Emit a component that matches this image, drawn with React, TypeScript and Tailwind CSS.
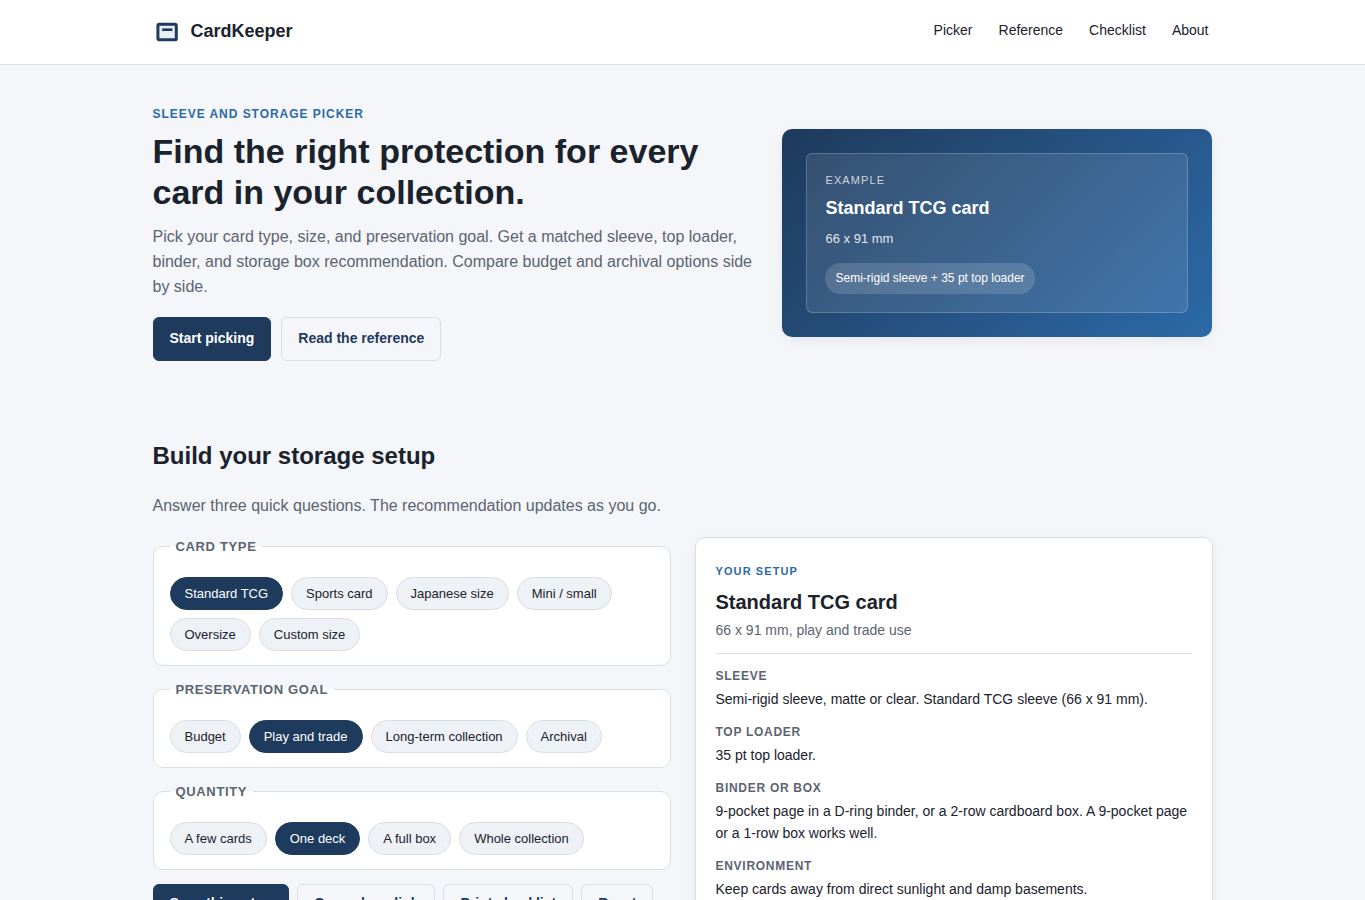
import { useState } from "react";

const navLinks = [
  { label: "Picker", href: "#picker" },
  { label: "Reference", href: "#reference" },
  { label: "Checklist", href: "#checklist" },
  { label: "About", href: "#about" },
];

const cardTypes = ["Standard TCG", "Sports card", "Japanese size", "Mini / small", "Oversize", "Custom size"];
const goals = ["Budget", "Play and trade", "Long-term collection", "Archival"];
const quantities = ["A few cards", "One deck", "A full box", "Whole collection"];

const setup = [
  { term: "Sleeve", detail: "Semi-rigid sleeve, matte or clear. Standard TCG sleeve (66 x 91 mm)." },
  { term: "Top loader", detail: "35 pt top loader." },
  {
    term: "Binder or box",
    detail: "9-pocket page in a D-ring binder, or a 2-row cardboard box. A 9-pocket page or a 1-row box works well.",
  },
  { term: "Environment", detail: "Keep cards away from direct sunlight and damp basements." },
];

const buttonBase = "rounded-md border px-4 py-2.5 text-sm font-bold";
const primaryButton = `${buttonBase} border-[#1e3a5c] bg-[#1e3a5c] text-white`;
const ghostButton = `${buttonBase} border-[#d9dee4] text-[#1e3a5c]`;

function Logo() {
  return (
    <svg width="28" height="28" viewBox="0 0 28 28" fill="none" aria-hidden="true">
      <rect x="4.9" y="6.2" width="18.4" height="15.6" rx="1.4" fill="#e6eff7" stroke="#1e3a5c" strokeWidth="3" />
      <path d="M9.2 11.7h10.2" stroke="#1e3a5c" strokeWidth="2.6" />
    </svg>
  );
}

function ChipGroup({ legend, options, initial }: { legend: string; options: string[]; initial: string }) {
  const [selected, setSelected] = useState(initial);
  return (
    <fieldset className="min-w-0 rounded-[10px] border border-[#d9dee4] bg-white px-4 pt-[21px] pb-3.5">
      <legend className="px-1.5 text-[13px] leading-[19px] font-bold tracking-[0.05em] text-[#5b6470] uppercase">
        {legend}
      </legend>
      <div className="flex flex-wrap gap-2">
        {options.map((option) => (
          <button
            key={option}
            type="button"
            aria-pressed={option === selected}
            onClick={() => setSelected(option)}
            className={`rounded-full border px-3.5 py-2 text-[13px] leading-[15px] ${
              option === selected
                ? "border-[#1e3a5c] bg-[#1e3a5c] text-white"
                : "border-[#d9dee4] bg-[#eef1f6] text-[#1a222c]"
            }`}
          >
            {option}
          </button>
        ))}
      </div>
    </fieldset>
  );
}

export default function App() {
  return (
    <div className="min-h-screen bg-[#f4f6fa] font-['Liberation_Sans',Arial,sans-serif] text-base text-[#1a222c]">
      <header className="border-b border-[#d9dee4] bg-white">
        <div className="mx-auto flex h-16 max-w-[1100px] items-center justify-between px-5">
          <a href="#home" className="flex items-center gap-2.5 text-lg leading-7 font-bold">
            <Logo />
            <span className="pb-0.5">CardKeeper</span>
          </a>
          <nav className="flex gap-[18px] pb-1 text-sm leading-[22px]" aria-label="Main">
            {navLinks.map((link) => (
              <a key={link.label} href={link.href} className="px-1">
                {link.label}
              </a>
            ))}
          </nav>
        </div>
      </header>

      <main className="mx-auto max-w-[1100px] px-5">
        <section className="grid grid-cols-[1.4fr_1fr] items-center gap-7 py-10">
          <div>
            <p className="mb-[7px] text-xs leading-[19px] font-bold tracking-[0.08em] text-[#2c6aa6] uppercase">
              Sleeve and storage picker
            </p>
            <h1 className="mb-[11px] text-[34px] leading-[41px] font-bold">
              Find the right protection for every card in your collection.
            </h1>
            <p className="mb-[18px] leading-[25px] text-[#5b6470]">
              Pick your card type, size, and preservation goal. Get a matched sleeve, top loader, binder, and storage
              box recommendation. Compare budget and archival options side by side.
            </p>
            <div className="flex flex-wrap gap-2.5 leading-[21px]">
              <a href="#picker" className={`${primaryButton} min-h-11 leading-5`}>
                Start picking
              </a>
              <a href="#reference" className={`${ghostButton} min-h-11 leading-5`}>
                Read the reference
              </a>
            </div>
          </div>

          <div className="rounded-[10px] bg-linear-135 from-[#1e3a5c] to-[#2c6aa8] p-6 text-white shadow-[0_4px_14px_rgba(15,23,42,0.06)]">
            <div className="rounded-md border border-white/20 bg-white/10 p-[18px]">
              <p className="mb-1.5 text-[11px] leading-[17px] tracking-[0.1em] text-white/75 uppercase">Example</p>
              <p className="mb-2 text-lg leading-[26px] font-bold">Standard TCG card</p>
              <p className="mb-3.5 text-[13px] leading-5 text-white/85">66 x 91 mm</p>
              <p className="w-fit rounded-full bg-white/15 px-2.5 py-1.5 text-xs leading-[19px]">
                Semi-rigid sleeve + 35 pt top loader
              </p>
            </div>
          </div>
        </section>

        <section id="picker" className="py-9">
          <h2 className="mb-[19px] text-2xl leading-[37px] font-bold">Build your storage setup</h2>
          <p className="mb-[19px] leading-[25px] text-[#5b6470]">
            Answer three quick questions. The recommendation updates as you go.
          </p>

          <div className="grid grid-cols-2 items-start gap-6">
            <form className="flex flex-col gap-3.5" onSubmit={(event) => event.preventDefault()}>
              <ChipGroup legend="Card type" options={cardTypes} initial="Standard TCG" />
              <ChipGroup legend="Preservation goal" options={goals} initial="Play and trade" />
              <ChipGroup legend="Quantity" options={quantities} initial="One deck" />
              <div className="flex flex-wrap gap-2">
                <button type="submit" className={`${primaryButton} leading-4`}>
                  Save this setup
                </button>
                <button type="button" className={`${ghostButton} leading-4`}>
                  Copy share link
                </button>
                <button type="button" className={`${ghostButton} leading-4`}>
                  Print checklist
                </button>
                <button type="reset" className={`${ghostButton} leading-4`}>
                  Reset
                </button>
              </div>
            </form>

            <aside className="rounded-[10px] border border-[#d9dee4] bg-white px-5 pt-[25px] pb-6 shadow-[0_4px_14px_rgba(15,23,42,0.06)]">
              <p className="mb-2 text-[11px] leading-[17px] font-bold tracking-[0.1em] text-[#2c6aa6] uppercase">
                Your setup
              </p>
              <h3 className="mb-[3px] text-xl leading-7 font-bold">Standard TCG card</h3>
              <p className="border-b border-[#d9dee4] pb-3 text-sm leading-[22px] text-[#5b6470]">
                66 x 91 mm, play and trade use
              </p>
              <dl className="mt-[13px] flex flex-col gap-[13px]">
                {setup.map((item) => (
                  <div key={item.term} className="flex flex-col gap-0.5">
                    <dt className="text-xs leading-[19px] font-bold tracking-[0.06em] text-[#5b6470] uppercase">
                      {item.term}
                    </dt>
                    <dd className="text-sm leading-[22px]">{item.detail}</dd>
                  </div>
                ))}
              </dl>
            </aside>
          </div>
        </section>
      </main>
    </div>
  );
}
